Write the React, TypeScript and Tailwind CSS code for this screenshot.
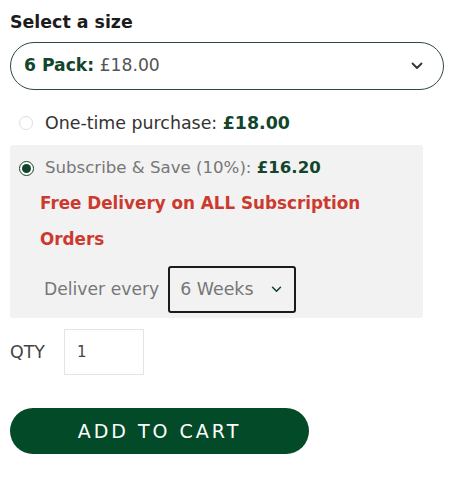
import React from 'react';

function Chevron({ className }: { className?: string }) {
  return (
    <svg viewBox="0 0 12 8" className={className} fill="none" stroke="currentColor" strokeWidth="1.8" strokeLinecap="round" strokeLinejoin="round">
      <path d="M1.5 1.5 6 6l4.5-4.5" />
    </svg>
  );
}

export default function App() {
  return (
    <div className="w-[469px] h-[480px] bg-white font-['DejaVu_Sans',sans-serif] text-[#222]">
      <div className="pl-[10px] pt-[12px] w-[444px]">
        <h2 className="text-[17.4px] font-bold leading-[20px] text-[#1c1c1c]">Select a size</h2>

        <button className="mt-[10px] w-[434px] h-[48px] rounded-full border border-[#2e4a40] flex items-center justify-between pl-[13px] pr-[20px]">
          <span className="text-[17.2px]">
            <b className="text-[#12452b]">6 Pack:</b> <span className="text-[#555]">£18.00</span>
          </span>
          <Chevron className="w-[12px] h-[8px] text-[#333]" />
        </button>

        <label className="mt-[21px] flex items-center gap-[12px] pl-[9px] h-[24px]">
          <span className="w-[14px] h-[14px] rounded-full border border-[#dedede] bg-white" />
          <span className="text-[17.4px] text-[#333]">
            One-time purchase: <b className="text-[#12452b]">£18.00</b>
          </span>
        </label>

        <div className="mt-[10px] w-[413px] bg-[#f2f2f2] rounded-[3px] pt-[11px] pb-[5px]">
          <label className="flex items-center gap-[11px] pl-[9px] h-[24px]">
            <span className="w-[15px] h-[15px] rounded-full border-[1.5px] border-[#12452b] bg-white flex items-center justify-center">
              <span className="w-[9px] h-[9px] rounded-full bg-[#12452b]" />
            </span>
            <span className="text-[16.6px] text-[#777]">
              Subscribe &amp; Save (10%): <b className="text-[#12452b]">£16.20</b>
            </span>
          </label>
          <p className="mt-[5px] pl-[30px] w-[370px] text-[16.8px] font-bold leading-[36px] text-[#cc3a2f]">
            Free Delivery on ALL Subscription Orders
          </p>
          <div className="mt-[9px] flex items-center gap-[9px] pl-[34px]">
            <span className="text-[17.2px] text-[#777]">Deliver every</span>
            <div className="w-[128px] h-[47px] border-2 border-[#1b1b1b] rounded-[3px] flex items-center justify-between pl-[10px] pr-[12px]">
              <span className="text-[17.4px] text-[#777]">6 Weeks</span>
              <Chevron className="w-[11px] h-[7px] text-[#12452b]" />
            </div>
          </div>
        </div>

        <div className="mt-[11px] flex items-center">
          <span className="w-[54px] text-[17.4px] text-[#444]">QTY</span>
          <div className="w-[80px] h-[46px] border border-[#e4e4e4] flex items-center pl-[12px] text-[15px] text-[#444]">1</div>
        </div>

        <button className="mt-[33px] w-[299px] h-[46px] rounded-full bg-[#034a28] text-white text-[19px] tracking-[3px] flex items-center justify-center">
          ADD TO CART
        </button>
      </div>
    </div>
  );
}
